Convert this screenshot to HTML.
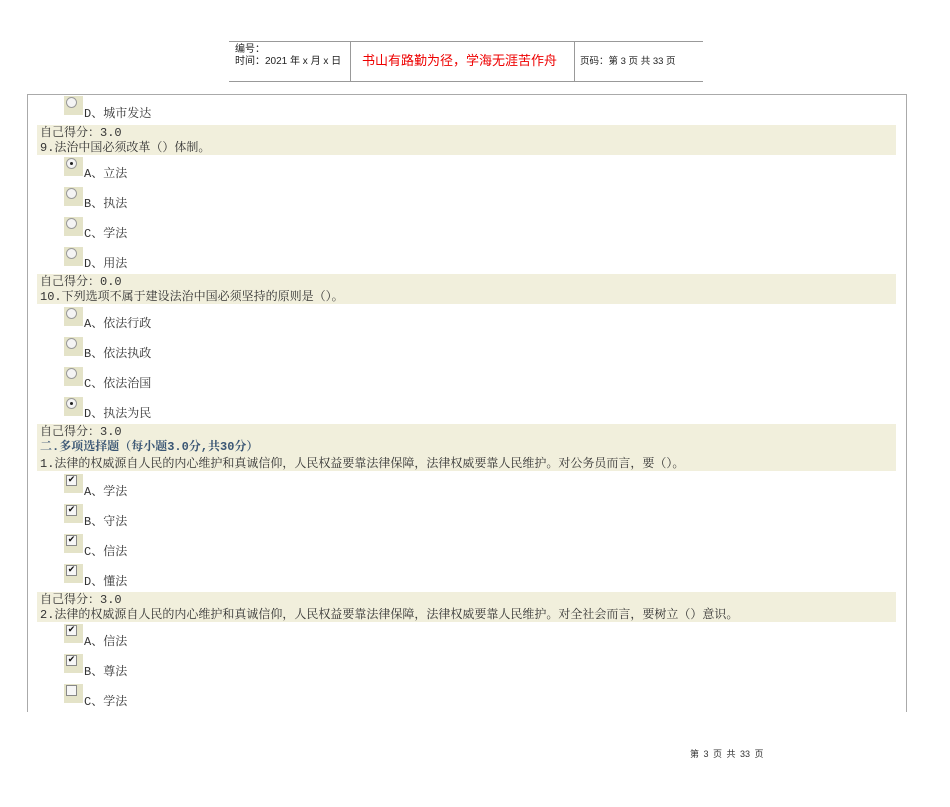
<!DOCTYPE html>
<html><head><meta charset="utf-8"><style>
body{margin:0;width:950px;height:807px;background:#fff;position:relative;overflow:hidden;font-family:"Liberation Mono","Noto Serif CJK SC",serif;font-size:12px;color:#333}
.a{position:absolute;white-space:nowrap;line-height:14px}
.band{position:absolute;left:37px;width:859px;background:#f1efdc}
.ic{position:absolute;left:64px;width:19px;height:19px;background:#e4e3c8}
.r{position:absolute;left:2px;top:1px;width:9px;height:9px;border-radius:50%;border:1px solid #999;background:#f4f4f4}
.r.s::after{content:"";position:absolute;left:3px;top:3px;width:3px;height:3px;border-radius:50%;background:#222}
.c{position:absolute;left:2px;top:1px;width:9px;height:9px;border:1px solid #888;background:#f6f6f6;font-size:9px;line-height:9px;text-align:center;color:#111;font-family:"DejaVu Sans",sans-serif}
.t{left:84px}
</style></head><body>
<div style="position:absolute;left:229px;top:41px;width:474px;height:1px;background:#999"></div>
<div style="position:absolute;left:229px;top:81px;width:474px;height:1px;background:#999"></div>
<div style="position:absolute;left:350px;top:41px;width:1px;height:40px;background:#999"></div>
<div style="position:absolute;left:574px;top:41px;width:1px;height:40px;background:#999"></div>
<div class="a" style="left:235px;top:44px;font-family:'Liberation Sans','Noto Sans CJK SC',sans-serif;font-size:10px;line-height:12px;color:#222">编号：<br>时间：2021 年 x 月 x 日</div>
<div class="a" style="left:362px;top:54px;font-family:'Liberation Sans','Noto Sans CJK SC',sans-serif;font-size:13px;color:#e00">书山有路勤为径，学海无涯苦作舟</div>
<div class="a" style="left:580px;top:55px;font-family:'Liberation Sans','Noto Sans CJK SC',sans-serif;font-size:9.5px;color:#222">页码：第 3 页 共 33 页</div>
<div style="position:absolute;left:27px;top:94px;width:878px;height:617px;border:1px solid #aaa;border-bottom:none"></div>

<div class="ic" style="top:96px"><div class="r"></div></div><div class="a t" style="top:107px">D、城市发达</div>
<div class="band" style="top:125px;height:30px"></div>
<div class="a" style="left:40px;top:126px">自己得分：3.0</div>
<div class="a" style="left:40px;top:141px">9.法治中国必须改革（）体制。</div>
<div class="ic" style="top:157px"><div class="r s"></div></div><div class="a t" style="top:167px">A、立法</div>
<div class="ic" style="top:187px"><div class="r"></div></div><div class="a t" style="top:197px">B、执法</div>
<div class="ic" style="top:217px"><div class="r"></div></div><div class="a t" style="top:227px">C、学法</div>
<div class="ic" style="top:247px"><div class="r"></div></div><div class="a t" style="top:257px">D、用法</div>
<div class="band" style="top:274px;height:30px"></div>
<div class="a" style="left:40px;top:275px">自己得分：0.0</div>
<div class="a" style="left:40px;top:290px">10.下列选项不属于建设法治中国必须坚持的原则是（）。</div>
<div class="ic" style="top:307px"><div class="r"></div></div><div class="a t" style="top:317px">A、依法行政</div>
<div class="ic" style="top:337px"><div class="r"></div></div><div class="a t" style="top:347px">B、依法执政</div>
<div class="ic" style="top:367px"><div class="r"></div></div><div class="a t" style="top:377px">C、依法治国</div>
<div class="ic" style="top:397px"><div class="r s"></div></div><div class="a t" style="top:407px">D、执法为民</div>
<div class="band" style="top:424px;height:47px"></div>
<div class="a" style="left:40px;top:425px">自己得分：3.0</div>
<div class="a" style="left:40px;top:440px;color:#3a5674;font-weight:bold">二.多项选择题（每小题3.0分,共30分）</div>
<div class="a" style="left:40px;top:457px">1.法律的权威源自人民的内心维护和真诚信仰，人民权益要靠法律保障，法律权威要靠人民维护。对公务员而言，要（）。</div>
<div class="ic" style="top:474px"><div class="c">✔</div></div><div class="a t" style="top:485px">A、学法</div>
<div class="ic" style="top:504px"><div class="c">✔</div></div><div class="a t" style="top:515px">B、守法</div>
<div class="ic" style="top:534px"><div class="c">✔</div></div><div class="a t" style="top:545px">C、信法</div>
<div class="ic" style="top:564px"><div class="c">✔</div></div><div class="a t" style="top:575px">D、懂法</div>
<div class="band" style="top:592px;height:30px"></div>
<div class="a" style="left:40px;top:593px">自己得分：3.0</div>
<div class="a" style="left:40px;top:608px">2.法律的权威源自人民的内心维护和真诚信仰，人民权益要靠法律保障，法律权威要靠人民维护。对全社会而言，要树立（）意识。</div>
<div class="ic" style="top:624px"><div class="c">✔</div></div><div class="a t" style="top:635px">A、信法</div>
<div class="ic" style="top:654px"><div class="c">✔</div></div><div class="a t" style="top:665px">B、尊法</div>
<div class="ic" style="top:684px"><div class="c"></div></div><div class="a t" style="top:695px">C、学法</div>
<div class="a" style="left:690px;top:747px;font-size:9px;font-family:'Liberation Sans','Noto Sans CJK SC',sans-serif;color:#333;word-spacing:2px">第 3 页 共 33 页</div>
</body></html>
